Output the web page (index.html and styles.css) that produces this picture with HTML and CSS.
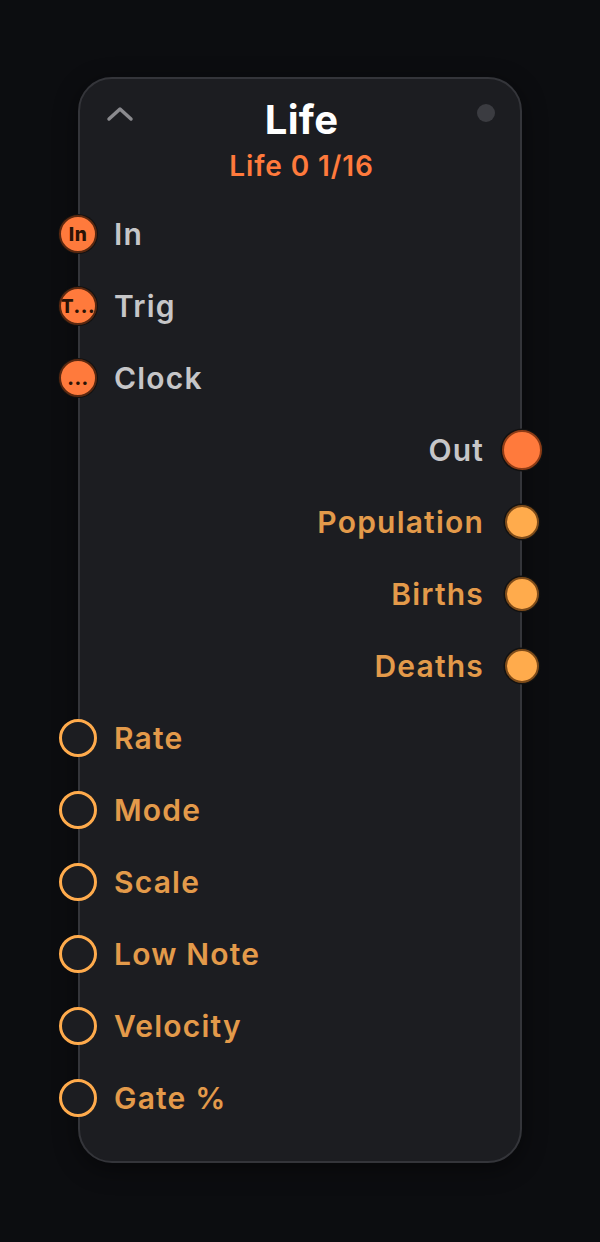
FILE: index.html
```html
<!DOCTYPE html>
<html lang="en">
<head>
    <meta charset="UTF-8">
    <meta name="viewport" content="width=device-width, initial-scale=1.0">
    <title>Life</title>
    <link rel="stylesheet" href="styles.css">
</head>
<body>
    <div class="node">
        <div class="node-header">
            <button class="collapse-btn" aria-label="Collapse">
                <svg width="28" height="16" viewBox="0 0 28 16">
                    <path d="M3 13 L14 3 L25 13" fill="none" stroke="#8a8a8e" stroke-width="3.5" stroke-linecap="round" stroke-linejoin="round"/>
                </svg>
            </button>
            <div class="node-titles">
                <h1 class="node-title">Life</h1>
                <div class="node-sub">Life 0 1/16</div>
            </div>
            <span class="status-dot"></span>
        </div>

        <div class="ports">
            <div class="port-row in">
                <span class="port filled">In</span>
                <span class="port-label">In</span>
            </div>
            <div class="port-row in">
                <span class="port filled">T...</span>
                <span class="port-label">Trig</span>
            </div>
            <div class="port-row in">
                <span class="port filled">...</span>
                <span class="port-label">Clock</span>
            </div>

            <div class="port-row out">
                <span class="port-label">Out</span>
                <span class="port main-out"></span>
            </div>
            <div class="port-row out">
                <span class="port-label orange">Population</span>
                <span class="port value-out"></span>
            </div>
            <div class="port-row out">
                <span class="port-label orange">Births</span>
                <span class="port value-out"></span>
            </div>
            <div class="port-row out">
                <span class="port-label orange">Deaths</span>
                <span class="port value-out"></span>
            </div>

            <div class="port-row in">
                <span class="port ring"></span>
                <span class="port-label orange">Rate</span>
            </div>
            <div class="port-row in">
                <span class="port ring"></span>
                <span class="port-label orange">Mode</span>
            </div>
            <div class="port-row in">
                <span class="port ring"></span>
                <span class="port-label orange">Scale</span>
            </div>
            <div class="port-row in">
                <span class="port ring"></span>
                <span class="port-label orange">Low Note</span>
            </div>
            <div class="port-row in">
                <span class="port ring"></span>
                <span class="port-label orange">Velocity</span>
            </div>
            <div class="port-row in">
                <span class="port ring"></span>
                <span class="port-label orange">Gate %</span>
            </div>
        </div>
    </div>
</body>
</html>
```

FILE: styles.css
```css
body {
    margin: 0;
    padding: 77px 0 40px;
    background: #0c0d10;
    font-family: Inter, "Noto Sans", sans-serif;
    -webkit-font-smoothing: antialiased;
}

.node {
    width: 440px;
    margin: 0 auto;
    background: #1c1d21;
    border: 2px solid #34353a;
    border-radius: 34px;
    box-shadow: 0 6px 24px rgba(0, 0, 0, 0.45);
    padding-bottom: 27px;
}

.node-header {
    display: grid;
    grid-template-columns: 1fr auto 1fr;
    padding: 19px 25px 0 28px;
}

.collapse-btn {
    justify-self: start;
    background: none;
    border: none;
    padding: 0;
    margin-top: 8px;
    width: 24px;
    height: 16px;
    display: flex;
    justify-content: center;
    cursor: pointer;
}

.collapse-btn svg {
    flex: none;
}

.node-titles {
    text-align: center;
}

.node-title {
    margin: 0;
    color: #ffffff;
    font-size: 40px;
    font-weight: 700;
    line-height: 44px;
    letter-spacing: 0.3px;
}

.node-sub {
    margin-top: 9px;
    color: #ff7a3c;
    font-size: 28px;
    font-weight: 600;
    line-height: 30px;
    letter-spacing: 0.9px;
}

.status-dot {
    justify-self: end;
    width: 18px;
    height: 18px;
    margin-top: 6px;
    border-radius: 50%;
    background: #3b3c41;
}

.ports {
    margin-top: 17px;
}

.port-row {
    display: flex;
    align-items: center;
    height: 72px;
}

.port-row.out {
    justify-content: flex-end;
}

.port-label {
    color: #c6c6c8;
    font-size: 30px;
    font-weight: 600;
    letter-spacing: 1.2px;
}

.port-label.orange {
    color: #e39a4a;
}

.port {
    box-sizing: border-box;
    border-radius: 50%;
    flex: none;
    display: flex;
    align-items: center;
    justify-content: center;
}

.port-row.in .port {
    margin-left: -21px;
    margin-right: 17px;
}

.port.filled {
    width: 38px;
    height: 38px;
    background: #ff7a3c;
    border: 2px solid #5a2810;
    box-shadow: 0 0 0 1px #111;
    color: #2a1206;
    font-size: 19px;
    font-weight: 800;
    letter-spacing: 0.5px;
    overflow: hidden;
    white-space: nowrap;
}

.port.ring {
    width: 38px;
    height: 38px;
    border: 3.5px solid #ffab4c;
    background: #1c1d21;
}

.port.main-out {
    width: 40px;
    height: 40px;
    margin-left: 18px;
    margin-right: -22px;
    background: #ff7a3c;
    border: 2px solid #8e3c16;
    box-shadow: 0 0 0 1.5px #111;
}

.port.value-out {
    width: 34px;
    height: 34px;
    margin-left: 21px;
    margin-right: -19px;
    background: #ffab4c;
    border: 2px solid #7e4c1a;
    box-shadow: 0 0 0 1.5px #111;
}
```
